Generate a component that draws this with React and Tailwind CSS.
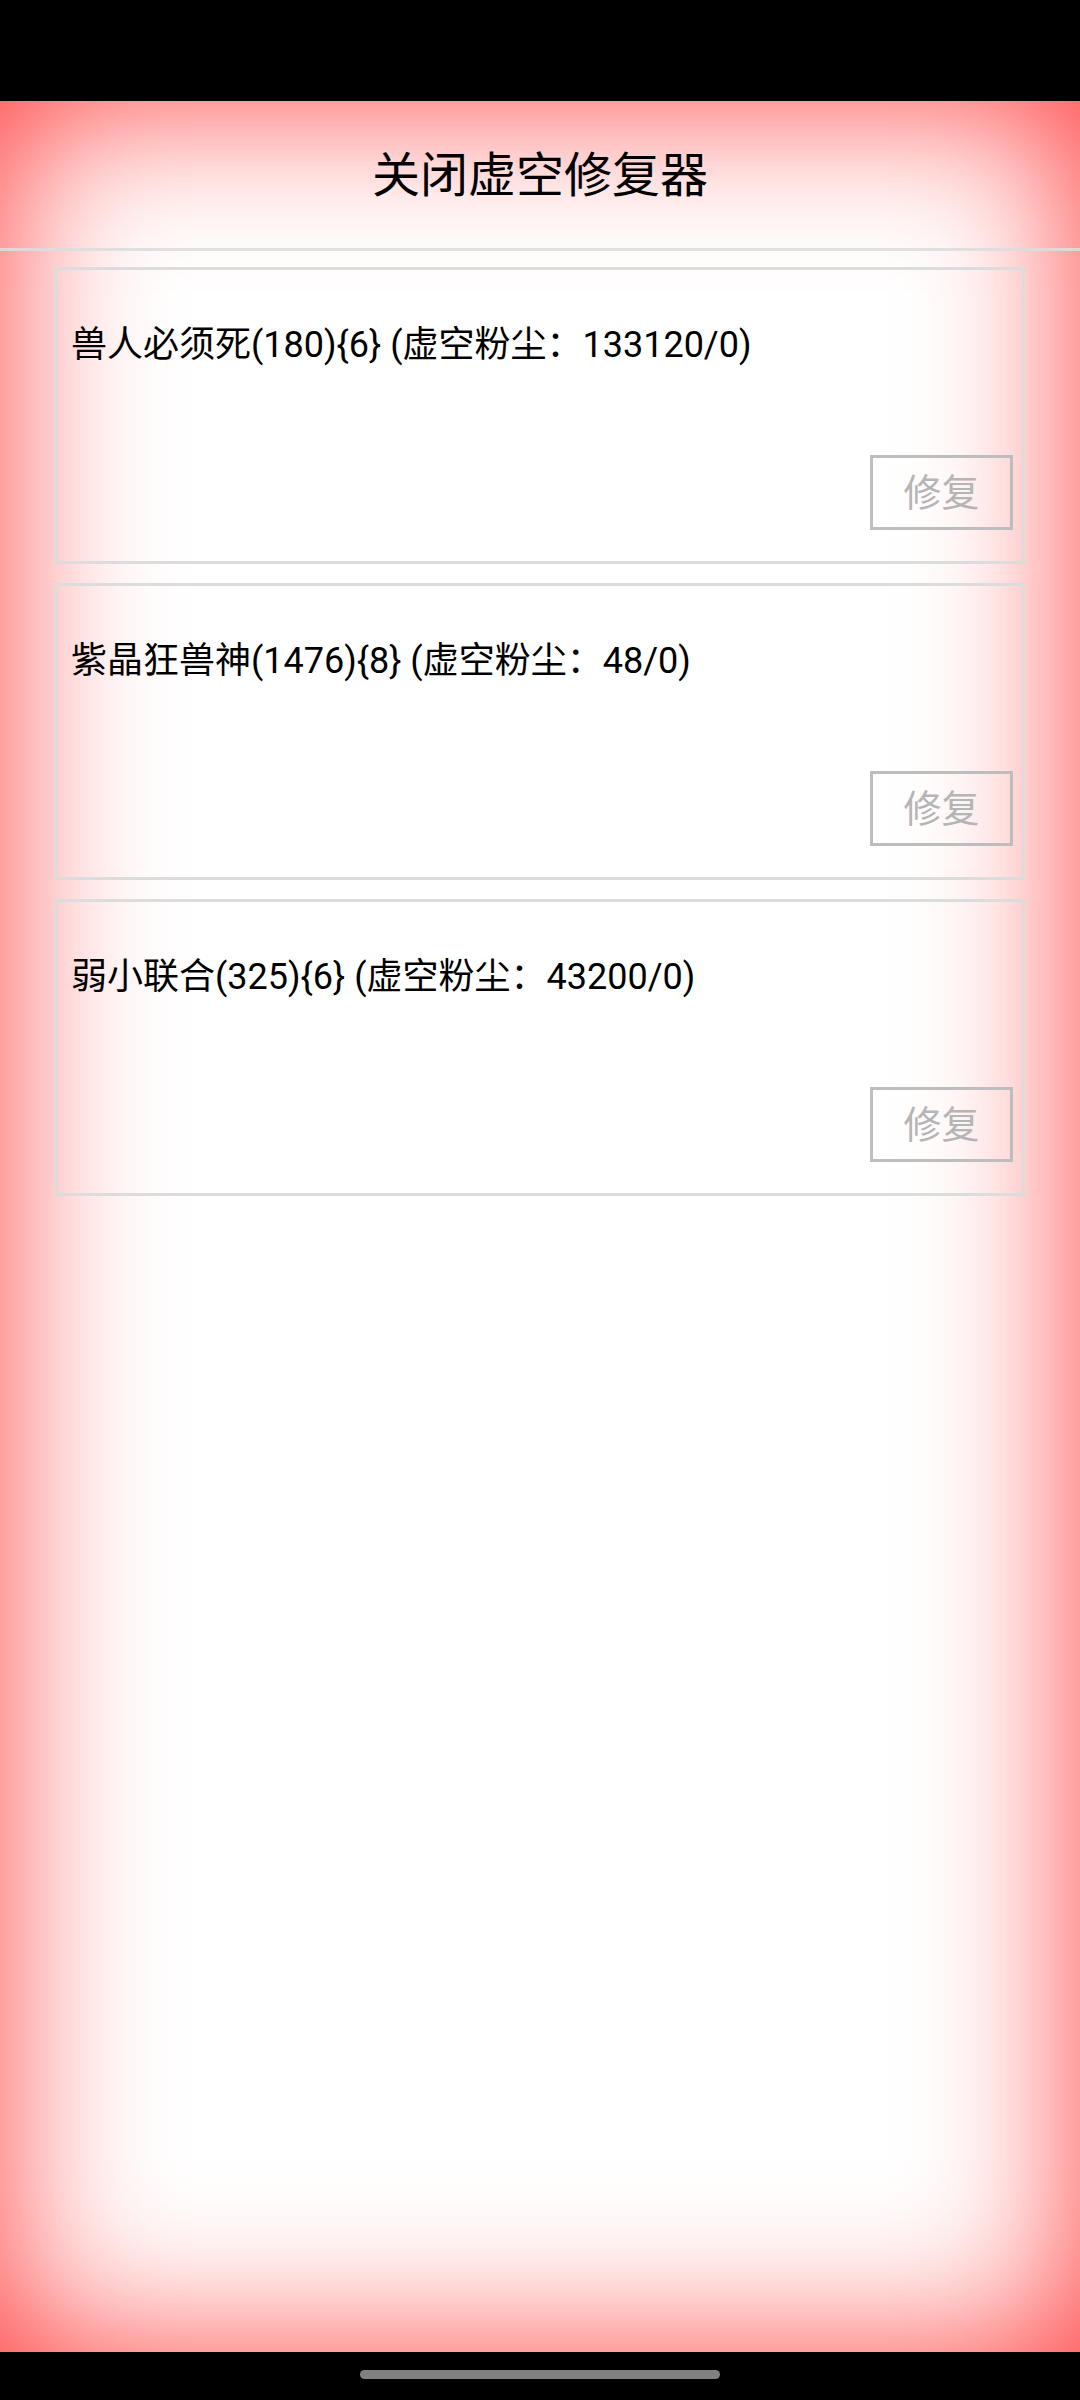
const items = [
  { name: "兽人必须死", level: 180, star: 6, dust: "133120/0" },
  { name: "紫晶狂兽神", level: 1476, star: 8, dust: "48/0" },
  { name: "弱小联合", level: 325, star: 6, dust: "43200/0" },
];

function RepairCard({ item }) {
  return (
    <div className="mx-[55px] h-[297px] border-[3px] border-[#dcdcdc] flex flex-col">
      <div className="pt-[51px] pl-[13px] text-[36px] leading-[48px] text-black">
        {item.name}({item.level}){"{"}{item.star}{"}"} (虚空粉尘：{item.dust})
      </div>
      <div className="flex-1" />
      <div className="flex justify-end pr-[9px] pb-[31px]">
        <button className="w-[143px] h-[75px] border-[3px] border-[#bdbdbd] text-[38px] leading-none text-[#b5b5b5] flex items-center justify-center">
          修复
        </button>
      </div>
    </div>
  );
}

export default function App() {
  return (
    <div
      className="w-[1080px] h-[2400px] bg-black flex flex-col"
      style={{ fontFamily: 'Roboto, "Noto Sans CJK SC", sans-serif' }}
    >
      {/* status bar */}
      <div className="h-[101px] shrink-0" />

      {/* screen with red vignette */}
      <div className="h-[2251px] shrink-0 bg-white shadow-[inset_0_0_160px_0_rgba(255,0,0,0.78)] flex flex-col">
        <div className="h-[147px] flex items-center justify-center text-[48px] text-black pt-[2px]">
          关闭虚空修复器
        </div>
        <div className="h-[3px] bg-[#dddddd]/90" />

        <div className="flex flex-col gap-[19px] mt-[16px]">
          {items.map((item) => (
            <RepairCard key={item.name} item={item} />
          ))}
        </div>
      </div>

      {/* nav bar */}
      <div className="h-[48px] shrink-0 flex items-center justify-center">
        <div className="w-[360px] h-[9px] rounded-full bg-[#808080] mt-[-4px]" />
      </div>
    </div>
  );
}
